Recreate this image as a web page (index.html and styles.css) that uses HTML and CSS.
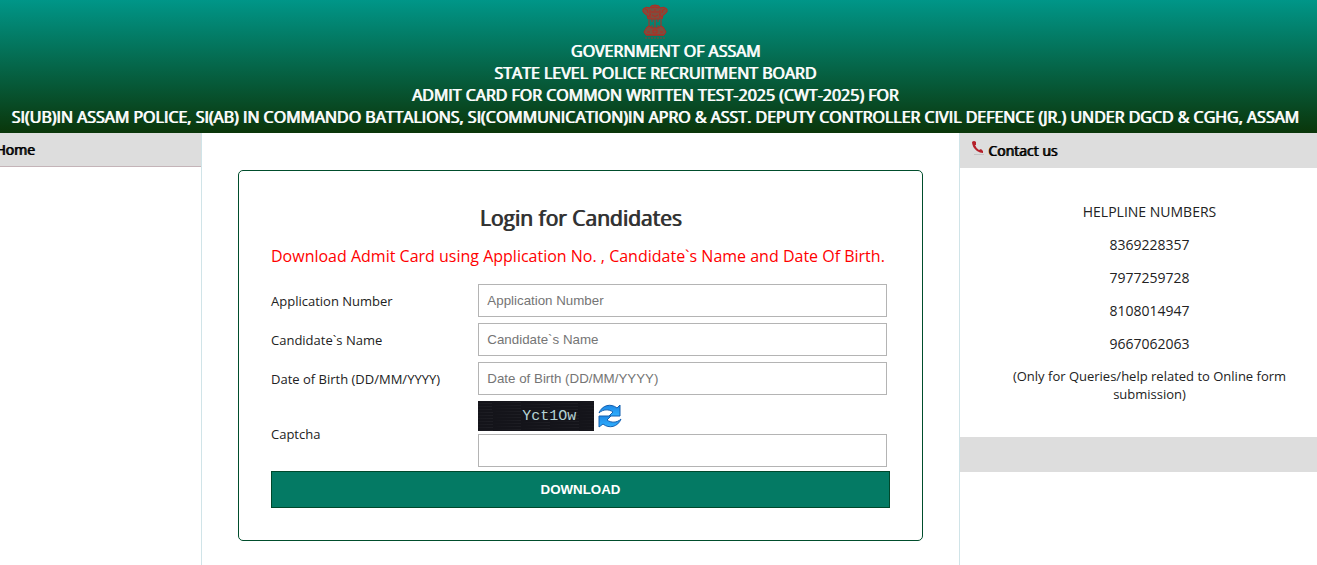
FILE: index.html
```
<!DOCTYPE html>
<html lang="en">
<head>
    <meta charset="utf-8">
    <title>SLPRB Assam - Admit Card</title>
    <link rel="stylesheet" href="styles.css">
</head>
<body>
    <header class="header">
        <svg class="emblem" viewBox="0 0 26 36" width="26" height="36" fill="none" stroke="#b52a20">
            <path fill="#7a5040" d="M9 2q4-2 8 0l1 2q4-2 7 1 1 3-2 5l-2 1-1 4H6l-1-4-2-1Q0 8 1 5q3-3 7-1z"/>
            <path d="M9 4q4-2 8 0M9 8h3m2 0h3M10 11q3 3 6 0M3 5q3 0 3 4m17-4q-3 0-3 4M8 6v8m10-8v8M6 13l3-3m8 0 3 3M13 5v4"/>
            <path d="M7 16v8m3-9v3m0 3v3m3-9v9m3-9v3m0 3v3m3-8v8"/>
            <path fill="#7a5040" d="M5 23q3-2 5 1h6q2-3 5-1l3 5-2 3H4l-2-3z"/>
            <path d="M5 28h3m3-2v3h4v-3zm7 2h3M4 31h18"/>
            <path stroke="#8a4034" stroke-dasharray="2 1" d="M3 34h20"/>
        </svg>
        <div>&nbsp;&nbsp;&nbsp;&nbsp;&nbsp;GOVERNMENT OF ASSAM</div>
        <div>STATE LEVEL POLICE RECRUITMENT BOARD</div>
        <div>ADMIT CARD FOR COMMON WRITTEN TEST-2025 (CWT-2025) FOR</div>
        <div>SI(UB)IN ASSAM POLICE, SI(AB) IN COMMANDO BATTALIONS, SI(COMMUNICATION)IN APRO &amp; ASST. DEPUTY CONTROLLER CIVIL DEFENCE (JR.) UNDER DGCD &amp; CGHG, ASSAM</div>
    </header>
    <div class="container">
        <nav class="left">
            <a class="menu-title" href="#">Home</a>
        </nav>
        <main class="main">
            <form class="login">
                <h2>Login for Candidates</h2>
                <p class="note">Download Admit Card using Application No. , Candidate`s Name and Date Of Birth.</p>
                <div class="row">
                    <label for="appno">Application Number</label>
                    <input type="text" id="appno" placeholder="Application Number">
                </div>
                <div class="row">
                    <label for="name">Candidate`s Name</label>
                    <input type="text" id="name" placeholder="Candidate`s Name">
                </div>
                <div class="row">
                    <label for="dob">Date of Birth (DD/MM/YYYY)</label>
                    <input type="text" id="dob" placeholder="Date of Birth (DD/MM/YYYY)">
                </div>
                <div class="row captcha-row">
                    <label for="captcha">Captcha</label>
                    <div>
                        <div class="captcha">
                            <span class="captcha-code">Yct1Ow</span>
                            <button type="button" class="refresh" aria-label="Refresh captcha">
                                <svg viewBox="0 0 24 24" width="24" height="24" fill="url(#blue)" stroke="#1560b0" stroke-linejoin="round">
                                    <defs>
                                        <linearGradient id="blue" x1="0" y1="0" x2="0" y2="1">
                                            <stop offset="0" stop-color="#1e88e5"/>
                                            <stop offset="1" stop-color="#2fb0ff"/>
                                        </linearGradient>
                                    </defs>
                                    <path d="M1 9C4 1 13-1 19 4l3-3v11H11l4-4C11 5 5 5 1 9z"/>
                                    <path d="M23 15c-3 8-12 10-18 5l-4 3V12h12l-4 4c4 3 10 3 14-1z"/>
                                </svg>
                            </button>
                        </div>
                        <input type="text" id="captcha">
                    </div>
                </div>
                <button type="submit" class="download">DOWNLOAD</button>
            </form>
        </main>
        <aside class="right">
            <div class="contact-title">
                <svg viewBox="0 0 14 16" width="14" height="16">
                    <path fill="#c4c4c4" d="M3 14h10v1H3z"/>
                    <path fill="#b5202a" d="M1 2q2-2 4 0v3H4q1 3 4 5l2-1 2 2v2q-3 0-6-2Q1 7 1 2z"/>
                </svg>
                <span>Contact us</span>
            </div>
            <div class="helpline">
                <p>HELPLINE NUMBERS</p>
                <p>8369228357</p>
                <p>7977259728</p>
                <p>8108014947</p>
                <p>9667062063</p>
                <p class="small">(Only for Queries/help related to Online form submission)</p>
            </div>
            <div class="bar"></div>
        </aside>
    </div>
</body>
</html>
```
FILE: styles.css
```
* {
    box-sizing: border-box;
}
body {
    margin: 0;
    min-height: 100vh;
    display: flex;
    flex-direction: column;
    font-family: "Open Sans", sans-serif;
    font-size: 13px;
    color: #222;
    background-color: #fff;
    overflow-x: hidden;
}
.header {
    padding: 4px 7px 5px 0;
    text-align: center;
    font-size: 16px;
    line-height: 22px;
    color: #fff;
    text-shadow: 1px 0 0 #fff;
    background: linear-gradient(#009688, #0a360a);
}
.emblem {
    display: block;
    margin: 0 auto;
}
.container {
    flex: 1;
    display: grid;
    grid-template-columns: 202px 1fr 358px;
}
.left {
    border-right: 1px solid #d0e4e8;
}
.menu-title {
    display: block;
    height: 34px;
    margin-left: -5px;
    font-size: 14px;
    line-height: 34px;
    color: #000;
    text-decoration: none;
    text-shadow: 1px 0 0 #000;
    background-color: #ddd;
    border-bottom: 1px solid #c4b4b8;
}
.main {
    padding: 37px 36px 24px;
}
.login {
    padding: 32px;
    border: 1px solid #004d2c;
    border-radius: 5px;
}
.login h2 {
    margin: 0;
    font-size: 21px;
    font-weight: normal;
    line-height: 30px;
    text-align: center;
    color: #333;
    text-shadow: 1px 0 0 #333;
}
.note {
    margin: 10px 0 15px;
    font-size: 16px;
    line-height: 26px;
    color: #f00;
}
.row {
    display: grid;
    grid-template-columns: 1fr 2fr;
    align-items: center;
    margin-bottom: 6px;
}
input[type="text"] {
    display: block;
    width: calc(100% - 4px);
    height: 33px;
    margin-left: 1px;
    padding: 0 8px;
    font-family: "Liberation Sans", Arial, sans-serif;
    border: 1px solid #b4b4b4;
}
input::placeholder {
    color: #757575;
}
.captcha-row {
    margin-bottom: 4px;
}
.captcha {
    display: flex;
    align-items: center;
    gap: 4px;
    margin: 0 0 3px 1px;
}
.captcha-code {
    width: 116px;
    height: 30px;
    padding-left: 44px;
    font-family: "Liberation Mono", monospace;
    font-size: 15px;
    line-height: 32px;
    color: #b4d2d4;
    background: repeating-linear-gradient(178deg, #14141a 0, #14141a 2px, #1e1e24 3px);
}
.refresh {
    height: 24px;
    padding: 0;
    border: none;
    background: none;
    cursor: pointer;
}
.download {
    display: block;
    width: 100%;
    height: 37px;
    font-family: "Liberation Sans", Arial, sans-serif;
    font-weight: bold;
    color: #fff;
    background-color: #047a64;
    border: 1px solid #00482c;
    cursor: pointer;
}
.right {
    border-left: 1px solid #d0e4e8;
}
.contact-title {
    display: flex;
    gap: 3px;
    height: 35px;
    padding: 7px 11px;
    font-size: 14px;
    line-height: 22px;
    color: #000;
    text-shadow: 1px 0 0 #000;
    background-color: #ddd;
}
.helpline {
    padding: 35px 21px 34px 43px;
    font-size: 14px;
    text-align: center;
}
.helpline p {
    margin: 0 0 15px;
    line-height: 18px;
}
.helpline .small {
    margin: -1px 0 0;
    font-size: 13px;
}
.bar {
    height: 35px;
    background-color: #ddd;
}
```
